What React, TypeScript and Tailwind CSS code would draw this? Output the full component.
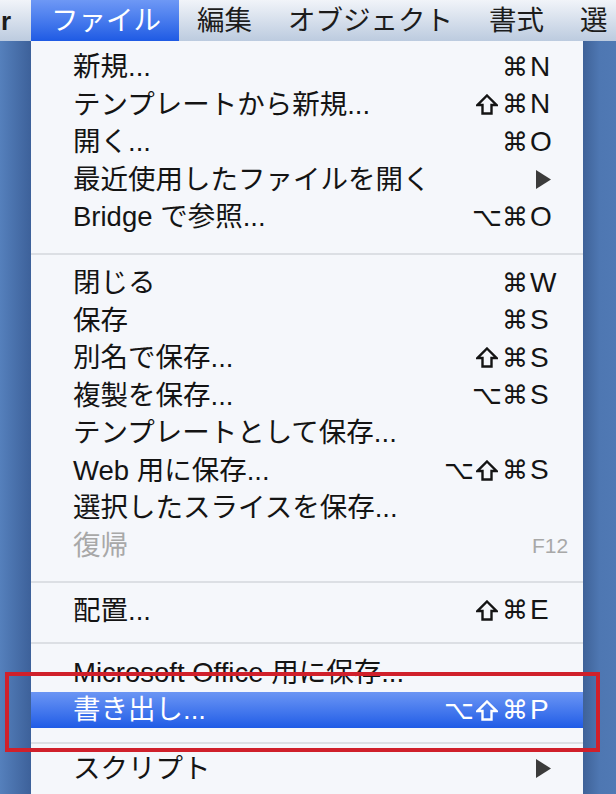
import React from 'react';

type Item = {
  label: string;
  mods?: string[];
  keyChar?: string;
  fkey?: string;
  arrow?: boolean;
  disabled?: boolean;
  active?: boolean;
  h?: string;
};

const sans = "font-['Liberation_Sans','Noto_Sans_CJK_JP',sans-serif]";
const symbols = "font-['DejaVu_Sans','Noto_Sans_CJK_JP',sans-serif]";

// outlined shift arrow, the font glyph comes out too thin
const ShiftIcon: React.FC<{ color: string }> = ({ color }) => (
  <svg width="22" height="21" viewBox="0 0 22 21" className="inline-block">
    <path
      d="M11 1.5 L20.5 11 L15.5 11 L15.5 19.5 L6.5 19.5 L6.5 11 L1.5 11 Z"
      fill="none"
      stroke={color}
      strokeWidth="2.4"
      strokeLinejoin="miter"
    />
  </svg>
);

const MenuRow: React.FC<{ item: Item }> = ({ item }) => {
  const tone = item.active
    ? 'bg-linear-to-b from-[#6b95f4] to-[#1f5be6] text-white'
    : item.disabled
      ? 'text-[#a8a8a8]'
      : 'text-[#141414]';
  const ink = item.active ? '#ffffff' : '#141414';

  return (
    <div className={`flex items-center pl-[42px] ${item.h ?? 'h-[37.5px]'} ${tone}`}>
      <span className={`flex-1 whitespace-nowrap text-[27.5px] leading-none ${sans}`}>{item.label}</span>
      <span className="flex justify-end items-center">
        {(item.mods ?? []).map((m, i) => (
          <span key={i} className={`w-[28px] flex justify-center text-[26px] leading-none ${symbols}`}>
            {m === '⇧' ? <ShiftIcon color={ink} /> : m}
          </span>
        ))}
      </span>
      <span className="w-[54px] flex items-center leading-none">
        {item.keyChar && (
          <span className={`pl-[1px] text-[28px] ${sans}`}>{item.keyChar}</span>
        )}
        {item.fkey && <span className={`pl-[3px] text-[21px] ${sans}`}>{item.fkey}</span>}
        {item.arrow && (
          <svg className="ml-[7px]" width="15" height="19" viewBox="0 0 15 19">
            <path d="M0 0 L15 9.5 L0 19 Z" fill="#3b3b3b" />
          </svg>
        )}
      </span>
    </div>
  );
};

const Separator: React.FC<{ className: string }> = ({ className }) => (
  <div className={`flex flex-col ${className}`}>
    <div className="h-[2px] bg-[#dcdfe4]" />
  </div>
);

const group1: Item[] = [
  { label: '新規...', mods: ['⌘'], keyChar: 'N' },
  { label: 'テンプレートから新規...', mods: ['⇧', '⌘'], keyChar: 'N' },
  { label: '開く...', mods: ['⌘'], keyChar: 'O' },
  { label: '最近使用したファイルを開く', arrow: true },
  { label: 'Bridge で参照...', mods: ['⌥', '⌘'], keyChar: 'O' },
];

const group2: Item[] = [
  { label: '閉じる', mods: ['⌘'], keyChar: 'W' },
  { label: '保存', mods: ['⌘'], keyChar: 'S' },
  { label: '別名で保存...', mods: ['⇧', '⌘'], keyChar: 'S' },
  { label: '複製を保存...', mods: ['⌥', '⌘'], keyChar: 'S' },
  { label: 'テンプレートとして保存...' },
  { label: 'Web 用に保存...', mods: ['⌥', '⇧', '⌘'], keyChar: 'S' },
  { label: '選択したスライスを保存...' },
  { label: '復帰', fkey: 'F12', disabled: true },
];

const menuTitles = ['編集', 'オブジェクト', '書式', '選'];

export default function App() {
  return (
    <div className={`relative w-[616px] h-[794px] overflow-hidden bg-[#4f78b3] ${sans}`}>
      {/* menu bar */}
      <div className="h-[41px] flex items-stretch whitespace-nowrap bg-linear-to-b from-[#f1f4f9] to-[#bccbdf] text-[#1c1c1c]">
        <span className="w-[31px] shrink-0 flex items-center pl-[1px] font-bold text-[26px] leading-none">r</span>
        <span className="shrink-0 flex items-center pl-[20px] pr-[18px] bg-linear-to-b from-[#6e98f5] to-[#1e5ae4] text-white text-[27.5px] leading-none">
          ファイル
        </span>
        {menuTitles.map((t) => (
          <span key={t} className="shrink-0 flex items-center px-[18px] text-[27.5px] leading-none">
            {t}
          </span>
        ))}
      </div>

      <div className="flex h-[753px]">
        <div className="w-[31px] bg-linear-to-r from-[#5580bc] to-[#3d619a]" />

        <div className="w-[552px] bg-[#f5f7fb] flex flex-col">
          <div className="h-[7px]" />
          {group1.map((item) => (
            <MenuRow key={item.label} item={item} />
          ))}
          <Separator className="h-[28.5px] pt-[17px]" />
          {group2.map((item) => (
            <MenuRow key={item.label} item={item} />
          ))}
          <Separator className="h-[27.5px] pt-[17px]" />
          <MenuRow item={{ label: '配置...', mods: ['⇧', '⌘'], keyChar: 'E' }} />
          <Separator className="h-[25px] pt-[13px]" />
          <MenuRow item={{ label: 'Microsoft Office 用に保存...', h: 'h-[38px]' }} />
          <MenuRow item={{ label: '書き出し...', mods: ['⌥', '⇧', '⌘'], keyChar: 'P', active: true, h: 'h-[36px]' }} />
          <Separator className="h-[22px] pt-[14px]" />
          <MenuRow item={{ label: 'スクリプト', arrow: true }} />
        </div>

        <div className="flex-1 bg-linear-to-r from-[#3f6298] via-[#4e77b2] to-[#5079b4]" />
      </div>

      {/* red annotation frame */}
      <div className="absolute left-[5px] top-[672px] w-[595px] h-[80px] border-[4.5px] border-[#d0202b]" />
    </div>
  );
}
